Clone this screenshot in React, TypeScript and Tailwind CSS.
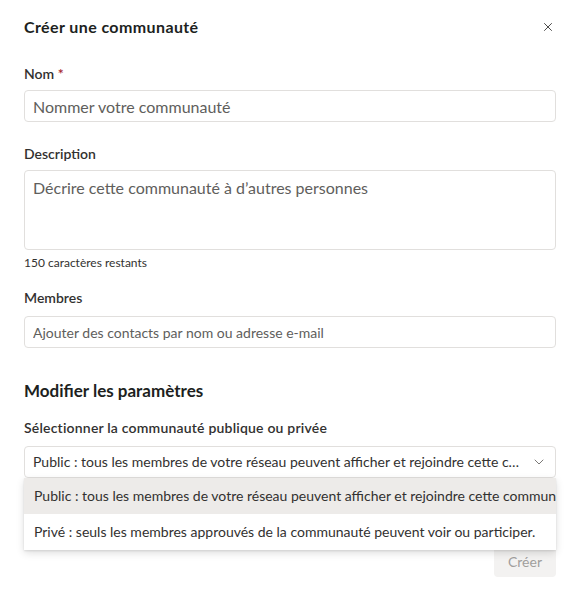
import { ChevronDown, X } from "lucide-react";

const font = { fontFamily: 'Lato, "Noto Sans", sans-serif' };

export default function App() {
  return (
    <div className="min-h-[602px] w-[580px] bg-white text-[#323130]" style={font}>
      <div className="px-6 pt-4">
        <div className="flex h-[22px] items-center justify-between">
          <h1 className="text-[16px] font-bold tracking-[0.4px] text-[#201f1e]">Créer une communauté</h1>
          <button className="mr-[-2px] flex h-5 w-5 items-center justify-center text-[#323130]">
            <X className="h-[14px] w-[14px]" strokeWidth={1.5} />
          </button>
        </div>

        <label className="mt-[26px] block h-5 text-sm font-semibold leading-5">
          Nom <span className="text-[#a4262c]">*</span>
        </label>
        <input
          className="mt-[6px] block h-8 w-full rounded-sm border border-[#e1dfdd] px-2 text-base text-[#323130] placeholder:text-[#605e5c] outline-none"
          placeholder="Nommer votre communauté"
        />

        <label className="mt-[22px] block h-5 text-sm font-semibold leading-5">Description</label>
        <textarea
          className="mt-[6px] block h-20 w-full resize-none rounded-sm border border-[#e1dfdd] px-2 py-[6px] text-base leading-[22px] placeholder:text-[#605e5c] outline-none"
          placeholder="Décrire cette communauté à d’autres personnes"
        />
        <p className="mt-[5px] h-4 text-xs leading-4 text-[#323130]">150 caractères restants</p>

        <label className="mt-[17px] block h-5 text-sm font-semibold leading-5">Membres</label>
        <input
          className="mt-2 block h-8 w-full rounded-sm border border-[#e1dfdd] px-2 text-sm placeholder:text-[#605e5c] outline-none"
          placeholder="Ajouter des contacts par nom ou adresse e-mail"
        />

        <h2 className="mt-[31px] h-6 text-[17px] font-bold leading-6 text-[#201f1e]">
          Modifier les paramètres
        </h2>
        <label className="mt-[15px] block h-5 text-sm font-semibold leading-5 tracking-[0.2px]">
          Sélectionner la communauté publique ou privée
        </label>

        <div className="relative mt-2">
          <div className="flex h-8 items-center rounded-sm border border-[#e1dfdd] pl-2 pr-2">
            <span className="flex-1 truncate text-sm">
              Public : tous les membres de votre réseau peuvent afficher et rejoindre cette communauté
            </span>
            <ChevronDown className="ml-3 h-4 w-4 text-[#605e5c]" strokeWidth={1.25} />
          </div>
          <div className="absolute left-0 right-0 top-full z-10 overflow-hidden bg-white shadow-[0_3px_8px_rgba(0,0,0,0.13),0_1px_2px_rgba(0,0,0,0.1)]">
            <div className="flex h-9 items-center whitespace-nowrap bg-[#edebe9] px-[10px] text-sm">
              Public : tous les membres de votre réseau peuvent afficher et rejoindre cette communauté
            </div>
            <div className="flex h-9 items-center whitespace-nowrap px-[10px] text-sm">
              Privé : seuls les membres approuvés de la communauté peuvent voir ou participer.
            </div>
          </div>
        </div>

        <div className="mt-[69px] flex justify-end">
          <button className="h-[30px] w-[62px] rounded-sm bg-[#f3f2f1] text-sm text-[#a19f9d]">Créer</button>
        </div>
      </div>
    </div>
  );
}
